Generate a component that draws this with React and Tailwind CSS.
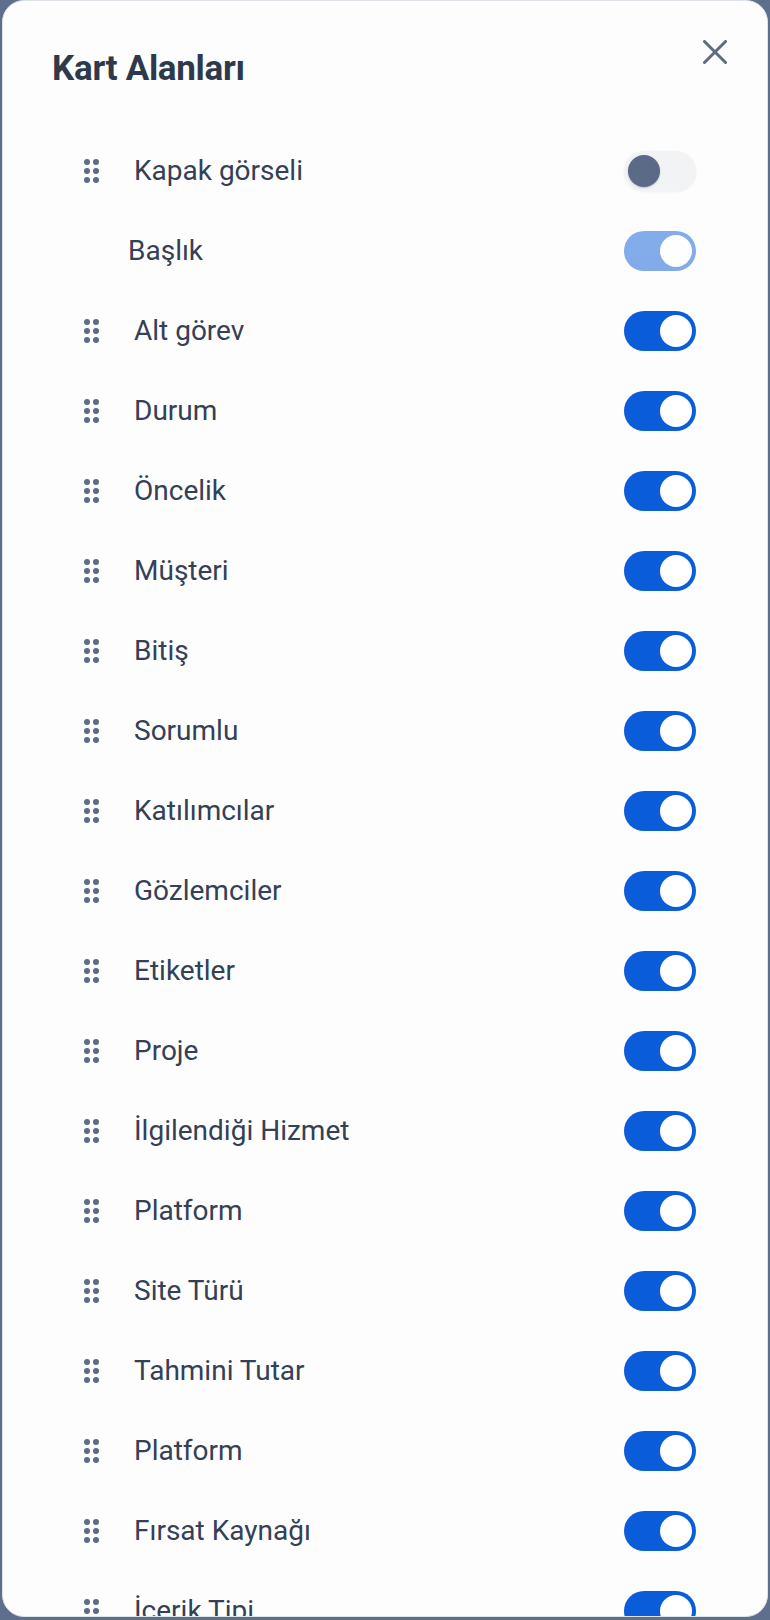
import React from 'react'

const fields = [
  { label: 'Kapak görseli', on: false },
  { label: 'Başlık', on: true, locked: true },
  { label: 'Alt görev', on: true },
  { label: 'Durum', on: true },
  { label: 'Öncelik', on: true },
  { label: 'Müşteri', on: true },
  { label: 'Bitiş', on: true },
  { label: 'Sorumlu', on: true },
  { label: 'Katılımcılar', on: true },
  { label: 'Gözlemciler', on: true },
  { label: 'Etiketler', on: true },
  { label: 'Proje', on: true },
  { label: 'İlgilendiği Hizmet', on: true },
  { label: 'Platform', on: true },
  { label: 'Site Türü', on: true },
  { label: 'Tahmini Tutar', on: true },
  { label: 'Platform', on: true },
  { label: 'Fırsat Kaynağı', on: true },
  { label: 'İçerik Tipi', on: true },
]

function Handle() {
  return (
    <div className="grid grid-cols-2 gap-[3px] shrink-0">
      {[0, 1, 2, 3, 4, 5].map((i) => (
        <span key={i} className="block h-[6px] w-[6px] rounded-full bg-[#5b6a87]" />
      ))}
    </div>
  )
}

function Toggle({ on, locked }) {
  if (!on) {
    return (
      <div className="ml-auto flex h-10 w-[72px] shrink-0 items-center rounded-full bg-[#f2f3f5] p-1 shadow-[0_1px_3px_rgba(0,0,0,0.06)]">
        <span className="h-8 w-8 rounded-full bg-[#5b6a87] shadow-[0_1px_2px_rgba(0,0,0,0.2)]" />
      </div>
    )
  }
  return (
    <div
      className={`ml-auto flex h-10 w-[72px] shrink-0 items-center justify-end rounded-full bg-[#0b5cd9] p-1 ${
        locked ? 'opacity-50' : ''
      }`}
    >
      <span className="h-8 w-8 rounded-full bg-white" />
    </div>
  )
}

export default function App() {
  return (
    <div
      className="h-[1620px] w-full overflow-hidden bg-[#5e6f8d] px-[2px] pt-0"
      style={{ fontFamily: 'Roboto, "Noto Sans", sans-serif' }}
    >
      <div className="h-[1617px] overflow-hidden rounded-[22px] border border-[#dfe2e6] bg-[#fdfdfd]">
        <div className="flex items-start justify-between pl-[49px] pr-[40px] pt-[39px]">
          <h2 className="mt-[9px] text-[35px] font-bold leading-10 tracking-[-0.3px] text-[#2e3a4b]">
            Kart Alanları
          </h2>
          <button className="flex h-6 w-6 items-center justify-center text-[#5b6a87]">
            <svg width="24" height="24" viewBox="0 0 24 24" fill="none" stroke="currentColor" strokeWidth="3" strokeLinecap="round">
              <path d="M1.5 1.5 22.5 22.5M22.5 1.5 1.5 22.5" />
            </svg>
          </button>
        </div>

        <ul className="mt-[42px]">
          {fields.map((f, i) => (
            <li
              key={i}
              className={`flex h-20 items-center pr-[71px] ${f.locked ? 'pl-[125px]' : 'pl-[81px]'}`}
            >
              {!f.locked && <Handle />}
              <span className={`text-[28px] leading-8 text-[#344055] ${f.locked ? '' : 'ml-[35px]'}`}>
                {f.label}
              </span>
              <Toggle on={f.on} locked={f.locked} />
            </li>
          ))}
        </ul>
      </div>
    </div>
  )
}
